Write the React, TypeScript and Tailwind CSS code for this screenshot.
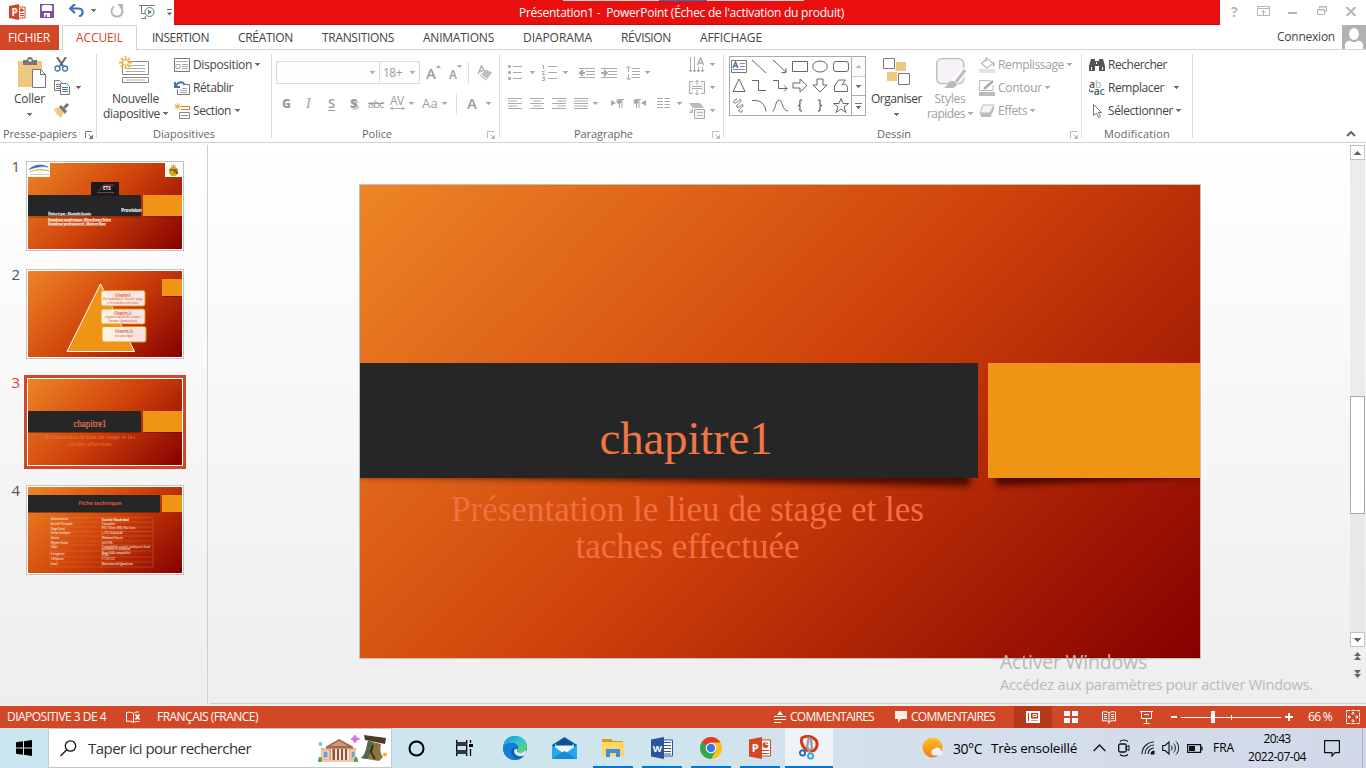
import { useLayoutEffect, useRef } from "react";
import type { ReactNode } from "react";

/* Text whose letter spacing is tuned so that the run is exactly `w` pixels wide. */
function Fit({ w, children, className = "" }: { w: number; children: string; className?: string }) {
  const ref = useRef<HTMLSpanElement>(null);
  useLayoutEffect(() => {
    const el = ref.current;
    if (!el) return;
    el.style.letterSpacing = "0px";
    const natural = el.getBoundingClientRect().width;
    el.style.letterSpacing = `${(w - natural) / children.length}px`;
  }, [w, children]);
  return (
    <span ref={ref} className={`inline-block shrink-0 whitespace-pre ${className}`}>
      {children}
    </span>
  );
}

function Ico({ w, h, className = "", children }: { w: number; h: number; className?: string; children: ReactNode }) {
  return (
    <svg width={w} height={h} viewBox={`0 0 ${w} ${h}`} fill="none" className={`block shrink-0 ${className}`}>
      {children}
    </svg>
  );
}

function Caret({ className = "text-[#6a6a6a]" }: { className?: string }) {
  return (
    <Ico w={5} h={3} className={className}>
      <path d="M0 0h5v1H4v1H3v1H2V2H1V1H0z" fill="currentColor" />
    </Ico>
  );
}

function GroupLabel({ w, children, launcher, faded }: { w: number; children: string; launcher?: string; faded?: boolean }) {
  return (
    <div className="relative flex h-5 items-center justify-center pt-1 text-[11px] text-[#666]">
      <Fit w={w}>{children}</Fit>
      {launcher && (
        <Ico w={8} h={8} className={`absolute top-[9px] ${launcher} ${faded ? "text-[#bbb]" : "text-[#777]"}`}>
          <path d="M.5 7V.5H7M3.500 3.500L7 7" stroke="currentColor" />
          <path d="M8 3.500V8H3.500z" fill="currentColor" />
        </Ico>
      )}
    </div>
  );
}

const Sep = () => <div className="mt-1 h-[84px] w-px shrink-0 bg-[#dedede]" />;

function Lines({ rows, className = "" }: { rows: [number, number][]; className?: string }) {
  return (
    <Ico w={14} h={12} className={`text-[#aaa] ${className}`}>
      {rows.map(([x, len], i) => (
        <path key={i} d={`M${x} ${i * 2.5 + 0.5}h${len}`} stroke="currentColor" />
      ))}
    </Ico>
  );
}

function TitleBar() {
  return (
    <div className="relative flex h-[25px] bg-white">
      <div className="flex w-[174px] items-center">
        <Ico w={17} h={16} className="-mt-0.5 ml-[9px]">
          <path d="M9 3h7v11H9z" fill="#fff" stroke="#d24726" />
          <path d="M11 6.500h4M11 9.500h4M11 11.500h4" stroke="#d24726" />
          <circle cx="12.500" cy="6" r="1.800" fill="#d24726" />
          <path d="M0 2l10-2v16L0 14z" fill="#d24726" />
          <text x="2.400" y="11.600" fontSize="10" fontWeight="700" fill="#fff">P</text>
        </Ico>
        <Ico w={14} h={14} className="-mt-[3px] ml-[14px]">
          <path d="M.9.9h12.200v12.200H.9z" stroke="#8250a0" strokeWidth="1.800" />
          <path d="M3 1h8v6H3z" fill="#fff" />
          <path d="M1 7h12v6H1z" fill="#8250a0" />
          <path d="M4 9h6v4H7v-2.500H5.500V13H4z" fill="#fff" />
        </Ico>
        <Ico w={15} h={13} className="-mt-1 ml-[15px]">
          <path d="M6 0L1 4.500l5 4.500M1.500 4.500H9c6 0 6 6.500 1 8" stroke="#3e74b5" strokeWidth="2.200" />
        </Ico>
        <div className="-mt-1 ml-[7px]"><Caret /></div>
        <Ico w={14} h={14} className="-mt-1 ml-[14px]">
          <path d="M4 2.500A5.500 5.500 0 1 0 10 2.500" stroke="#b5b5b5" strokeWidth="2" />
          <path d="M7 0h6v6z" fill="#b5b5b5" />
        </Ico>
        <Ico w={16} h={16} className="-mt-0.5 ml-[15px]">
          <path d="M0 1.500h16M2.500 2v7.500H7M5 15l2-3M2 14.500h5" stroke="#777" />
          <circle cx="10.500" cy="8" r="4.500" fill="#fff" stroke="#777" />
          <path d="M9 5.500v5l4-2.500z" fill="#3d9b6b" />
        </Ico>
        <Ico w={5} h={7} className="ml-[12px]">
          <path d="M0 .5h5" stroke="#666" />
          <path d="M0 3.500h5L2.500 6.500z" fill="#666" />
        </Ico>
      </div>
      <div className="flex w-[1046px] items-center justify-center border-b border-[#c40d0d] bg-[#ea0f0f] pt-px text-[12px] text-white">
        <Fit w={325} className="-ml-[31px]">Présentation1 -  PowerPoint (Échec de l'activation du produit)</Fit>
      </div>
      <div className="flex w-[146px] items-center text-[#b5b5b5]">
        <span className="-mt-0.5 ml-[11px] w-[7px] text-[14px] leading-none font-bold">?</span>
        <Ico w={13} h={10} className="-mt-1 ml-[19px]">
          <path d="M.5.5h12v9H.5zM1 2.500h11M6.500 9V4.500M4.500 6.500l2-2 2 2" stroke="currentColor" />
        </Ico>
        <Ico w={9} h={2} className="ml-[18px]">
          <path d="M0 0h9v2H0z" fill="currentColor" />
        </Ico>
        <Ico w={10} h={9} className="-mt-1 ml-[20px]">
          <path d="M2.500 2.500V.5h7v5H8M.5 3.500h7v5h-7zM0 4h8M2.500 1h7" stroke="currentColor" />
        </Ico>
        <Ico w={10} h={9} className="-mt-[3px] ml-[19px]">
          <path d="M.5 0l9 9M9.500 0l-9 9" stroke="currentColor" strokeWidth="2" />
        </Ico>
      </div>
      <div className="absolute top-0 left-[563px] flex h-px w-[241px] bg-[#d9d3d2]">
        <div className="ml-24 h-px w-12 bg-[#1976d2]" />
      </div>
    </div>
  );
}

function TabBar() {
  return (
    <div className="flex h-[25px] border-b border-[#d5d5d5] bg-white text-[12px] text-[#444]">
      <div className="flex h-[25px] w-[59px] items-center bg-[#d24726] pl-2 text-white">
        <Fit w={42}>FICHIER</Fit>
      </div>
      <div className="ml-[3px] flex h-[25px] w-[75px] items-center border-x border-t border-[#d5d5d5] bg-white pl-[13px] text-[#d24726]">
        <Fit w={47}>ACCUEIL</Fit>
      </div>
      <div className="flex h-[25px] items-center pl-[15px]">
        <Fit w={57}>INSERTION</Fit>
        <Fit w={55} className="ml-[29px]">CRÉATION</Fit>
        <Fit w={72} className="ml-[29px]">TRANSITIONS</Fit>
        <Fit w={71} className="ml-[29px]">ANIMATIONS</Fit>
        <Fit w={69} className="ml-[29px]">DIAPORAMA</Fit>
        <Fit w={50} className="ml-[29px]">RÉVISION</Fit>
        <Fit w={62} className="ml-[29px]">AFFICHAGE</Fit>
      </div>
      <div className="ml-auto flex h-[24px] items-center">
        <Fit w={58} className="mr-[7px]">Connexion</Fit>
        <Ico w={24} h={24}>
          <path d="M0 0h24v24H0z" fill="#b1b1b1" />
          <ellipse cx="12" cy="9" rx="5" ry="6" fill="#fff" />
          <path d="M3 24v-4c0-3 3-4 5-4.500 2 2 6 2 8 0 2 .5 5 1.500 5 4.500v4z" fill="#fff" />
        </Ico>
      </div>
    </div>
  );
}

function ClipboardGroup() {
  return (
    <div className="w-24">
      <div className="flex h-[72px]">
        <div className="flex w-[54px] flex-col items-center pt-[7px] pl-[5px]">
          <Ico w={28} h={31} className="ml-1">
            <path d="M0 4h24v26H0z" fill="#edc87e" />
            <path d="M5 3h4c0-4 6-4 6 0h4v5H5z" fill="#777" />
            <path d="M10.500 2.500h3v2h-3z" fill="#fff" />
            <path d="M14.500 12.500h8l5 5v13h-13z" fill="#fff" stroke="#777" />
            <path d="M22.500 12.500v5h5" stroke="#777" />
          </Ico>
          <div className="mt-px flex h-5 items-center"><Fit w={31}>Coller</Fit></div>
          <div className="mt-1"><Caret /></div>
        </div>
        <div className="pt-[3px]">
          <div className="flex h-[23px] items-center">
            <Ico w={15} h={15}>
              <path d="M3 0l6 9M12 0L6 9" stroke="#666" strokeWidth="2" />
              <circle cx="3.500" cy="11.500" r="2.500" stroke="#3e74b5" strokeWidth="1.300" />
              <circle cx="11" cy="11.500" r="2.500" stroke="#3e74b5" strokeWidth="1.300" />
            </Ico>
          </div>
          <div className="flex h-[23px] items-center">
            <Ico w={16} h={15}>
              <path d="M.5.5h5l2 2v8h-7zM2 4.500h4M2 6.500h4M2 8.500h4" stroke="#777" />
              <path d="M6.500 3.500h6l3 3v8h-9z" fill="#fff" stroke="#777" />
              <path d="M8 7.500h6M8 9.500h6M8 11.500h6" stroke="#3e74b5" />
            </Ico>
            <div className="ml-1.5"><Caret /></div>
          </div>
          <div className="flex h-[23px] items-center">
            <Ico w={16} h={15}>
              <path d="M0 6l5-2 5 5-3 6C4 13 1 10 0 6z" fill="#edc87e" />
              <path d="M5 4l2-2 6 6-2 3z" fill="#777" />
              <path d="M10 5l4-4" stroke="#777" strokeWidth="3" />
            </Ico>
          </div>
        </div>
      </div>
      <div className="-ml-4"><GroupLabel w={74} launcher="left-[101px]">Presse-papiers</GroupLabel></div>
    </div>
  );
}

function SlidesGroup() {
  return (
    <div className="w-[174px]">
      <div className="flex h-[72px]">
        <div className="flex w-[77px] flex-col items-center pt-[6px]">
          <Ico w={31} h={29} className="-ml-[3px]">
            <path d="M3.500 5.500h26v13h-26zM3.500 21.500h26v5h-26z" fill="#fff" stroke="#888" />
            <path d="M10 9.500h16M7 12.500h19M7 15.500h19M7 24h19" stroke="#aaa" />
            <path d="M6.500 0v13M0 6.500h13M2 2l9 9M11 2l-9 9" stroke="#edb849" strokeWidth="1.800" />
            <circle cx="6.500" cy="6.500" r="2.300" fill="#fff" />
          </Ico>
          <div className="mt-[6px] flex h-[15px] items-center leading-[15px]"><Fit w={47}>Nouvelle</Fit></div>
          <div className="flex h-[15px] items-center leading-[15px]">
            <Fit w={57}>diapositive</Fit>
            <div className="ml-[3px]"><Caret /></div>
          </div>
        </div>
        <div className="pt-[3px]">
          <div className="flex h-[23px] items-center">
            <Ico w={16} h={14}>
              <path d="M.5.5h15v13H.5z" stroke="#777" />
              <path d="M2 3.500h12M2 6.500h4v4H2z" stroke="#aaa" />
              <path d="M8 6.500h6M8 8.500h6M8 10.500h6" stroke="#aaa" />
            </Ico>
            <Fit w={59} className="ml-[3px]">Disposition</Fit>
            <div className="ml-[3px]"><Caret /></div>
          </div>
          <div className="flex h-[23px] items-center">
            <Ico w={16} h={14}>
              <path d="M3.500 8v5.500h12V3.500H10" stroke="#777" />
              <path d="M8 7.500h5M6 9.500h7M6 11.500h7" stroke="#aaa" />
              <path d="M1 1v5h5M1.500 5.500C4 0 9 0 10.500 4" stroke="#3e74b5" strokeWidth="2" />
            </Ico>
            <Fit w={40} className="ml-[3px]">Rétablir</Fit>
          </div>
          <div className="flex h-[23px] items-center">
            <Ico w={16} h={16}>
              <path d="M7 3.500h8.500v3H7" stroke="#e07a2e" />
              <path d="M5.500 9.500h10v6h-10zM7 12.500h7" stroke="#888" />
              <path d="M3.500 0v7M0 3.500h7M1 1l5 5M6 1L1 6" stroke="#edb849" />
            </Ico>
            <Fit w={38} className="ml-[3px]">Section</Fit>
            <div className="ml-1"><Caret /></div>
          </div>
        </div>
      </div>
      <GroupLabel w={62}>Diapositives</GroupLabel>
    </div>
  );
}

const faded = "text-[#aaa]";

function FontGroup() {
  return (
    <div className="w-[227px]">
      <div className="h-[72px] pt-[11px] text-[#9d9d9d]">
        <div className="flex h-[23px] items-center pl-1">
          <div className="flex h-[23px] w-[104px] items-center justify-end border border-[#dcdcdc] bg-[#fdfdfd] pr-[4px]">
            <Caret className={faded} />
          </div>
          <div className="flex h-[23px] w-[40px] items-center justify-between border-y border-r border-[#dcdcdc] bg-[#fdfdfd] pr-[4px] pl-[3px]">
            <Fit w={19}>18+</Fit>
            <Caret className={faded} />
          </div>
          <span className="ml-[6px] w-[10px] pt-px text-[15px] leading-none font-semibold">A</span>
          <Ico w={5} h={3} className="mb-3"><path d="M0 3h5L2.500 0z" fill="#aaa" /></Ico>
          <span className="ml-[8px] w-[8px] pt-1 text-[12px] leading-none font-semibold">A</span>
          <Ico w={5} h={3} className="mb-3"><path d="M0 0h5L2.500 3z" fill="#aaa" /></Ico>
          <div className="ml-[6px] h-[22px] w-px bg-[#dedede]" />
          <Ico w={16} h={16} className="ml-[8px]">
            <path d="M1 9l3.500-8L8 7M2 6h4" stroke="#aaa" strokeWidth="1.400" />
            <path d="M9 4.500l6 3-6 8-6-5z" fill="#bdbdbd" />
            <path d="M4 9.500l6 4.500" stroke="#fff" />
          </Ico>
        </div>
        <div className="mt-2 flex h-[23px] items-center pl-[10px] leading-none">
          <span className="w-[24px] text-[12px] font-extrabold">G</span>
          <span className="w-[22px] font-['Liberation_Serif',serif] text-[14px] italic">I</span>
          <span className="w-[22px] text-[13px] font-semibold underline underline-offset-2">S</span>
          <span className="w-[18px] text-[13px] font-extrabold [text-shadow:2px_2px_1px_#ccc]">S</span>
          <span className="w-[22px] text-[11px] tracking-[-0.8px] line-through">abc</span>
          <div className="w-[16px]">
            <div className="text-[12px] leading-[10px] tracking-[-0.5px]">AV</div>
            <Ico w={15} h={5}><path d="M0 2.500h15M3 .5l-2 2 2 2M12 .5l2 2-2 2" stroke="#aaa" /></Ico>
          </div>
          <div className="ml-[3px] w-[5px]"><Caret className={faded} /></div>
          <Fit w={16} className="ml-[8px] text-[13px]">Aa</Fit>
          <div className="ml-[4px] w-[5px]"><Caret className={faded} /></div>
          <div className="ml-[9px] h-[22px] w-px bg-[#dedede]" />
          <span className="ml-[10px] w-[10px] text-[15px] font-semibold">A</span>
          <div className="ml-[9px] w-[5px]"><Caret className={faded} /></div>
        </div>
      </div>
      <div className="-ml-[17px]"><GroupLabel w={30} launcher="left-[232px]" faded>Police</GroupLabel></div>
    </div>
  );
}

function ParagraphGroup() {
  const indentLines = "M0 .5h16M7 3.500h9M7 6.500h9M0 9.500h16";
  return (
    <div className="w-[223px]">
      <div className="flex h-[72px]">
        <div className="w-[189px] pt-[11px] text-[#aaa]">
          <div className="flex h-[23px] items-center pl-2">
            <Ico w={14} h={15}>
              <path d="M0 1.500h3M0 7.500h3M0 13.500h3" stroke="#aaa" strokeWidth="2.600" />
              <path d="M5 1.500h9M5 7.500h9M5 13.500h9" stroke="#aaa" />
            </Ico>
            <div className="ml-[8px]"><Caret className={faded} /></div>
            <Ico w={15} h={16} className="ml-[7px]">
              <path d="M0 .5h1.500V4M0 6.500h2.500L.5 9.500H3M0 12h2.500v3.500H0M1 13.500h2M6 1.500h9M6 7.500h9M6 13.500h9" stroke="#aaa" />
            </Ico>
            <div className="ml-[6px]"><Caret className={faded} /></div>
            <Ico w={16} h={10} className="ml-[11px]">
              <path d={indentLines} stroke="#aaa" />
              <path d="M6 5H1M4 2L1 5l3 3" stroke="#aaa" strokeWidth="2" />
            </Ico>
            <Ico w={16} h={10} className="ml-[6px]">
              <path d={indentLines} stroke="#aaa" />
              <path d="M0 5h5M3 2l3 3-3 3" stroke="#aaa" strokeWidth="2" />
            </Ico>
            <Ico w={14} h={16} className="ml-[9px]">
              <path d="M2.500 1v6M2.500 9v6M0 3.500L2.500 1 5 3.500M0 12.500L2.500 15 5 12.500M6 3.500h8M6 6.500h8M6 9.500h8M6 12.500h8" stroke="#aaa" />
            </Ico>
            <div className="ml-[5px]"><Caret className={faded} /></div>
          </div>
          <div className="mt-2 flex h-[23px] items-center pl-2">
            <Lines rows={[[0, 14], [0, 9], [0, 14], [0, 9], [0, 14]]} />
            <Lines className="ml-2" rows={[[0, 14], [3, 8], [0, 14], [3, 8], [0, 14]]} />
            <Lines className="ml-2" rows={[[0, 14], [5, 9], [0, 14], [5, 9], [0, 14]]} />
            <Lines className="ml-2" rows={[[0, 14], [0, 14], [0, 14], [0, 14], [0, 14]]} />
            <div className="ml-[5px]"><Caret className={faded} /></div>
            <Ico w={13} h={9} className="ml-[13px]">
              <path d="M0 1l5 3-5 3z" fill="#aaa" />
              <path d="M8.500 0v9M11 0v9M7 .5h6" stroke="#aaa" /><circle cx="8" cy="2.500" r="2.500" fill="#aaa" />
            </Ico>
            <Ico w={13} h={9} className="ml-[9px]">
              <path d="M13 1L8 4l5 3z" fill="#aaa" />
              <path d="M3.500 0v9M6 0v9M2 .5h6" stroke="#aaa" /><circle cx="3" cy="2.500" r="2.500" fill="#aaa" />
            </Ico>
            <Ico w={13} h={12} className="ml-[11px]">
              <path d="M0 .5h6M7.500.5h6M0 3.500h6M7.500 3.500h6M0 6.500h6M7.500 6.500h6M0 9.500h6M7.500 9.500h6" stroke="#aaa" />
            </Ico>
            <div className="ml-[7px]"><Caret className={faded} /></div>
          </div>
        </div>
        <div className="pt-[3px]">
          <div className="flex h-[23px] items-center">
            <Ico w={16} h={16}>
              <path d="M1.500 0v15M5.500 0v15M9.500 10v5M13.500 10v5M0 13l1.500 2L3 13M4 13l1.500 2L7 13M8 13l1.500 2 1.500-2M12 13l1.500 2 1.500-2" stroke="#aaa" />
              <path d="M8.500 8l3-7 3 7M9.500 6h4" stroke="#aaa" strokeWidth="1.500" />
            </Ico>
            <div className="ml-[5px]"><Caret className={faded} /></div>
          </div>
          <div className="flex h-[23px] items-center">
            <Ico w={16} h={16}>
              <path d="M4 1.500H.5v12H4M12 1.500h3.500v12H12" fill="#f6f2f6" stroke="#aaa" />
              <path d="M3 6.500h10M3 8.500h10M8 0v5M8 10v5M6 2.500L8 .5l2 2M6 13l2 2 2-2" stroke="#aaa" />
            </Ico>
            <div className="ml-[5px]"><Caret className={faded} /></div>
          </div>
          <div className="flex h-[23px] items-center">
            <Ico w={16} h={16}>
              <path d="M0 0h11l4 5H4z M0 10l4-5v5z" fill="#bbb" />
              <path d="M5.500 6.500h10v9h-10z" fill="#f6f2f6" stroke="#aaa" />
              <path d="M8 9.500h6M8 12.500h6" stroke="#bbb" />
            </Ico>
            <div className="ml-[5px]"><Caret className={faded} /></div>
          </div>
        </div>
      </div>
      <div className="-ml-4"><GroupLabel w={59} launcher="left-[228px]" faded>Paragraphe</GroupLabel></div>
    </div>
  );
}

const shapes: ReactNode[] = [
  <><path d="M.5 1.500h15v12H.5z" stroke="#777" /><path d="M2 9l2.500-6L7 9M3 7h3" stroke="#3e74b5" strokeWidth="1.400" /><path d="M9 4.500h5M9 7.500h5M2 10.500h12" stroke="#888" /></>,
  <path d="M1 1l14 13" stroke="#666" />,
  <path d="M1 1l13 12M14 9v4.500H9.500" stroke="#666" />,
  <path d="M.5 2.500h15v10H.5z" stroke="#666" />,
  <ellipse cx="8" cy="7.500" rx="7.300" ry="5.500" stroke="#666" />,
  <rect x=".5" y="2.500" width="15" height="10" rx="2.500" stroke="#666" />,
  <path d="M8 1l6 12.500H2z" stroke="#666" />,
  <path d="M1 2.500h6.500v10H15" stroke="#666" />,
  <path d="M1 2.500h5.500v8H15M12 7.500l3 3-3 3" stroke="#666" />,
  <path d="M1 5h7V1l7 6.500L8 14v-4H1z" stroke="#666" />,
  <path d="M5 1v6H1l7 7 7-7h-4V1z" stroke="#666" />,
  <path d="M1.500 13.500V8l4-6h7L9 7c4-2 6 0 5.500 6.500z" stroke="#666" />,
  <path d="M6 1C2 2 2 5 4 5s5-5 6-3-6 5-4 7 5-4 6-2-5 4-4 6 4 1 3-1" stroke="#666" />,
  <path d="M1 2.500c8-1 13 3 14 11" stroke="#666" />,
  <path d="M0 13c4 0 3-11 7-11s3 11 9 11" stroke="#666" />,
  <path d="M10 2c-3 0-2 1-2 3s0 2.500-2 2.500c2 0 2 .5 2 2.500s-1 3 2 3" stroke="#666" strokeWidth="1.300" />,
  <path d="M6 2c3 0 2 1 2 3s0 2.500 2 2.500c-2 0-2 .5-2 2.500s1 3-2 3" stroke="#666" strokeWidth="1.300" />,
  <path d="M8 .5l2 5h5.500l-4.500 3.500 2 5.500L8 11l-5 3.500L5 9 .5 5.500H6z" stroke="#666" />,
];

function DrawingGroup() {
  return (
    <div className="w-[357px]">
      <div className="flex h-[72px]">
        <div className="mt-[6px] ml-[5px] flex h-[60px] w-[137px] border border-[#ababab]">
          <div className="-ml-px grid w-[122px] grid-cols-6 grid-rows-3 items-center justify-items-center">
            {shapes.map((s, i) => (
              <Ico key={i} w={16} h={15}>{s}</Ico>
            ))}
          </div>
          <div className="flex w-[14px] flex-col border-l border-[#ababab]">
            <div className="flex flex-1 items-center justify-center border-b border-[#ccc] bg-[#fafafa]">
              <Caret className="rotate-180 text-[#bbb]" />
            </div>
            <div className="flex flex-1 items-center justify-center border-b border-[#ababab]"><Caret /></div>
            <div className="flex flex-1 flex-col items-center justify-center gap-0.5">
              <div className="h-px w-[7px] bg-[#777]" />
              <Caret />
            </div>
          </div>
        </div>
        <div className="flex w-[61px] flex-col items-center pt-2">
          <Ico w={28} h={28}>
            <path d="M13 4h10v9H13zM4 14h10v9H4z" fill="#edc87e" />
            <path d="M.5.5h11v10H.5zM15.500 15.500h11v11h-11z" fill="#fff" stroke="#777" />
          </Ico>
          <div className="mt-[3px] flex h-5 items-center"><Fit w={51}>Organiser</Fit></div>
          <div className="mt-1"><Caret /></div>
        </div>
        <div className="flex w-[48px] flex-col items-center pt-2 text-[#a0a0a0]">
          <Ico w={30} h={31}>
            <rect x=".7" y=".7" width="27" height="25" rx="5" fill="#f6f2f7" stroke="#bbb" strokeWidth="1.300" />
            <path d="M30 12L18 24" stroke="#fff" strokeWidth="7" />
            <path d="M29 12l-9 12" stroke="#bbb" strokeWidth="3" />
            <path d="M7 30c5-1 4-8 10-7s4 7-1 7z" fill="#bbb" />
          </Ico>
          <div className="mt-[2px] -ml-[2px] flex h-[15px] items-center leading-[15px]"><Fit w={31}>Styles</Fit></div>
          <div className="-ml-[2px] flex h-[15px] items-center leading-[15px]">
            <Fit w={38}>rapides</Fit>
            <div className="ml-[3px]"><Caret className={faded} /></div>
          </div>
        </div>
        <div className="ml-[4px] pt-[3px] text-[#a0a0a0]">
          <div className="flex h-[23px] items-center">
            <Ico w={17} h={16}>
              <path d="M2.500 6.500L8 1.500l6 5-6 4.500zM7 0v5" stroke="#bbb" strokeWidth="1.200" />
              <path d="M14 4c2 2 2 5 0 6z" fill="#aaa" />
              <path d="M0 12h16v4H0z" fill="#e6e0e4" />
            </Ico>
            <Fit w={66} className="ml-[2px]">Remplissage</Fit>
            <div className="ml-[3px]"><Caret className={faded} /></div>
          </div>
          <div className="flex h-[23px] items-center">
            <Ico w={17} h={16}>
              <path d="M14 5v5.500H.5V.5H11" stroke="#bbb" />
              <path d="M5 9l9-8" stroke="#aaa" strokeWidth="2.500" />
              <path d="M0 12h16v4H0z" fill="#bbb" />
            </Ico>
            <Fit w={44} className="ml-[2px]">Contour</Fit>
            <div className="ml-[3px]"><Caret className={faded} /></div>
          </div>
          <div className="flex h-[23px] items-center">
            <Ico w={17} h={14}>
              <path d="M4 1h11L11 9H1z" fill="#f6f2f7" stroke="#bbb" />
              <path d="M1 9h10l4-8v4l-3.500 8H2z" fill="#bbb" />
            </Ico>
            <Fit w={29} className="ml-[2px]">Effets</Fit>
            <div className="ml-[3px]"><Caret className={faded} /></div>
          </div>
        </div>
      </div>
      <div className="-ml-[17px]"><GroupLabel w={34} launcher="left-[363px]" faded>Dessin</GroupLabel></div>
    </div>
  );
}

function EditGroup() {
  return (
    <div className="w-[110px]">
      <div className="h-[72px] pt-[3px] pl-[7px]">
        <div className="flex h-[23px] items-center">
          <Ico w={16} h={13}>
            <path d="M2 1h4v2h4V1h4l2 7v5h-6V8H6v5H0V8z" fill="#555" />
            <path d="M2.500 9v3M13.500 9v3M7.500 4v2" stroke="#fff" />
          </Ico>
          <Fit w={59} className="ml-[3px]">Rechercher</Fit>
        </div>
        <div className="flex h-[23px] items-center">
          <Ico w={16} h={16}>
            <g fontSize="10.500" fontWeight="600">
              <text x="0" y="7.500" fill="#555">a</text>
              <text x="6" y="7.500" fill="#aaa" fontWeight="400">b</text>
              <text x="4.800" y="14.500" fill="#555">a</text>
              <text x="10.600" y="14.500" fill="#3e74b5">c</text>
            </g>
            <path d="M.5 9v2.500H4M2.500 10L4 11.500 2.500 13" stroke="#3e74b5" />
          </Ico>
          <Fit w={56} className="ml-[3px]">Remplacer</Fit>
          <div className="ml-[10px]"><Caret /></div>
        </div>
        <div className="flex h-[23px] items-center">
          <Ico w={16} h={14}>
            <path d="M4.500.5v11l3-2.500 2 4.500 2-1-2-4h3z" stroke="#777" />
          </Ico>
          <Fit w={65} className="ml-[3px]">Sélectionner</Fit>
          <div className="ml-[3px]"><Caret /></div>
        </div>
      </div>
      <GroupLabel w={66}>Modification</GroupLabel>
    </div>
  );
}

function Ribbon() {
  return (
    <div className="flex h-[93px] border-b border-[#d2d2d2] bg-white text-[12px] text-[#444]">
      <ClipboardGroup /><Sep />
      <SlidesGroup /><Sep />
      <FontGroup /><Sep />
      <ParagraphGroup /><Sep />
      <DrawingGroup /><Sep />
      <EditGroup /><Sep />
      <div className="flex flex-1 items-end justify-end pr-[10px] pb-[5px]">
        <Ico w={10} h={6}><path d="M1 5l4-4 4 4" stroke="#666" strokeWidth="2" /></Ico>
      </div>
    </div>
  );
}

const slideBg = "bg-[linear-gradient(135deg,#ee8526_0%,#cf420a_50%,#850000_100%)]";

const thumbArt: ReactNode[] = [
  <>
    <path d="M0 0h22v14H0zM137 0h17v14h-17z" fill="#fff" />
    <path d="M1 6.500c5-5 13-6 19-2.500C14 3 8 4 1 6.500z" fill="#2c6fb7" stroke="#2c6fb7" strokeWidth=".6" />
    <path d="M2 9c6-3 13-3 19-1" stroke="#ef9414" />
    <path d="M2 11.500h19" stroke="#aaa" strokeWidth=".6" />
    <ellipse cx="145.500" cy="8.500" rx="4.800" ry="4.800" fill="#d8aa16" />
    <path d="M145.500 1v4M143 3h5" stroke="#e08080" />
    <path d="M142 7h7M146 9h3v2" stroke="#443300" strokeWidth="1.200" />
    <path d="M0 53.500h112v1H0zM117 53.500h37v1h-37z" fill="#4a0b00" opacity=".5" />
    <path d="M0 32h113v21H0z" fill="#262626" />
    <path d="M115 32h39v21h-39z" fill="#ef9414" />
    <path d="M63 19h28v14H63z" fill="#1c1a1c" />
    <path d="M71 28l5-6h10" stroke="#b33" />
    <text x="75" y="27" fontSize="4.500" fontWeight="700" fill="#fff">ETS</text>
    <path d="M69 29.500h17" stroke="#946" strokeWidth=".8" />
    <text x="93" y="49" fontSize="4.800" fontWeight="700" fill="#fff" textLength="21">Provision</text>
    <g fontSize="3.400" fontWeight="700" fill="#fff" textDecoration="underline">
      <text x="20" y="51.500" textLength="43">Élaboré par : Mostafa Souria</text>
      <text x="20" y="57.500" textLength="63">Encadreur académique : Mme Amani Selmi</text>
      <text x="20" y="61.500" textLength="58">Encadreur professionnel : Mariem Nasr</text>
    </g>
  </>,
  <>
    <path d="M134 8h20v17h-20z" fill="#ef9414" />
    <path d="M135 25.500h19" stroke="#4a0b00" opacity=".5" />
    <path d="M72.500 13l34 67.500H39z" fill="#ef9414" stroke="#fff" />
    <g fill="#fff" fillOpacity=".88" stroke="#ef9414">
      <rect x="73" y="19.500" width="44" height="15.500" rx="2" />
      <rect x="73" y="38" width="44" height="15" rx="2" />
      <rect x="74" y="55.500" width="44" height="15.500" rx="2" />
    </g>
    <g fontSize="3.800" textAnchor="middle" fill="#e0503a" className="font-['Liberation_Serif',serif]">
      <text x="95" y="24.500" fontWeight="700" fontStyle="italic" textDecoration="underline">Chapitre1</text>
      <text x="95" y="29" textLength="40">Présentation le lieu de stage</text>
      <text x="95" y="32.500" textLength="32">et les taches effectuée</text>
      <text x="95" y="42.500" fontWeight="700" fontStyle="italic" textDecoration="underline">Chapitre 2:</text>
      <text x="95" y="47" textLength="36">régularisation des autres</text>
      <text x="95" y="50.500" textLength="28">banque (provision)</text>
      <text x="96" y="60.500" fontWeight="700" fontStyle="italic" textDecoration="underline">Chapitre 3:</text>
      <text x="96" y="65.500">cas pratique</text>
    </g>
  </>,
  <>
    <path d="M0 53h112v1H0zM117 53h37v1h-37z" fill="#4a0b00" opacity=".5" />
    <path d="M0 32h113v21H0z" fill="#262626" />
    <path d="M115 32h39v21h-39z" fill="#ef9414" />
    <g fill="#f07646" textAnchor="middle" className="font-['Liberation_Serif',serif]">
      <text x="62" y="48" fontSize="10" stroke="#f07646" strokeWidth=".2" textLength="33" lengthAdjust="spacingAndGlyphs">chapitre1</text>
      <text x="62" y="60" fontSize="6" textLength="90" fontWeight="700" opacity=".7">Présentation le lieu de stage et les</text>
      <text x="62" y="67" fontSize="6" textLength="43" fontWeight="700" opacity=".7">taches effectuée</text>
    </g>
  </>,
  <>
    <path d="M0 25h131v1H0z" fill="#4a0b00" opacity=".5" />
    <path d="M0 8h132v17H0z" fill="#262626" />
    <path d="M134 8h20v17h-20z" fill="#ef9414" />
    <text x="72" y="18" fontSize="5.600" fontWeight="700" fill="#e0553a" textAnchor="middle" textLength="43">Fiche technique</text>
    <g stroke="#ef8a3a" strokeWidth=".5" opacity=".6">
      <path d="M22 30.500h103M22 35h103M22 40h103M22 44.500h103M22 49h103M22 54h103M22 58h103M22 64h103M22 70h103M22 75h103M22 80h103M22 30.500V80M73.500 30.500V80M125 30.500V80" />
    </g>
    <g fontSize="2.500" fontWeight="600" fill="#fff" fillOpacity=".85">
      <text x="23" y="32.500">Dénomination</text><text x="74" y="33.500" fontSize="2.900" fontWeight="800">Société Hasdrubal</text>
      <text x="23" y="37.500">Activité Principale</text><text x="74" y="37.500">Comptable</text>
      <text x="23" y="42.500">Siège Social</text><text x="74" y="41.600">RTE, 10 km, 3000, Sfax Tunis</text>
      <text x="23" y="46.500">Forme Juridique</text><text x="74" y="46.500">+ 216 74 44 44 44</text>
      <text x="23" y="51.500">Gérant</text><text x="74" y="51.500">Mohamed Souria</text>
      <text x="23" y="56.500">Régime fiscale</text><text x="74" y="57">réel 25%</text>
      <text x="23" y="60.500">Objet</text><text x="74" y="60.500" textLength="48">Comptabilité, conseil, juridique et fiscal</text>
      <text x="74" y="63.300">assistance et formation</text>
      <text x="23" y="67.500">Enregistrée</text><text x="74" y="66.500">Rapp 5404 comptabilité</text>
      <text x="74" y="69.400">Et juri</text>
      <text x="23" y="72.500">Téléphone</text><text x="74" y="72.500">71 222 222</text>
      <text x="23" y="77.500">Email</text><text x="74" y="77.500" textLength="31">Mail.contact.fa.f@gmail.com</text>
    </g>
  </>,
];

function Thumbnails() {
  return (
    <div className="w-[207px] shrink-0 pt-[18px]">
      {thumbArt.map((art, i) => {
        const active = i === 2;
        return (
          <div key={i} className="flex h-[108px]">
            <div className={`w-[26px] shrink-0 pl-[11.500px] text-[15px] leading-[10px] ${active ? "text-[#d24726]" : "text-[#555]"}`}>{i + 1}</div>
            <div className={`h-[90px] w-[158px] border bg-white p-px ${active ? "border-[#d24726] outline-2 outline-[#d24726]" : "border-[#c3c3c3]"}`}>
              <div className={`h-[86px] w-[154px] overflow-hidden ${slideBg}`}>
                <Ico w={154} h={86}>{art}</Ico>
              </div>
            </div>
          </div>
        );
      })}
    </div>
  );
}

function Slide() {
  return (
    <div className="mt-[41px] ml-[151px] h-[475px] w-[842px] shrink-0 border border-[#c0c0c0]">
      <div className={`relative h-[473px] w-[840px] overflow-hidden ${slideBg}`}>
        <Ico w={840} h={473} className="absolute top-0 left-0">
          <defs>
            <filter id="soft" x="-5%" y="-200%" width="110%" height="500%"><feGaussianBlur stdDeviation="3" /></filter>
          </defs>
          <g fill="#2a0500" opacity=".75" filter="url(#soft)">
            <path d="M-20 280h630v21L-20 291z" />
            <path d="M636 280h230v11l-230 10z" />
          </g>
        </Ico>
        <div className="absolute top-[178px] left-0 h-[115px] w-[618px] bg-[#262626]" />
        <div className="absolute top-[178px] left-[628px] h-[115px] w-[212px] bg-[#ef9414]" />
        <div className="absolute top-[226px] left-0 w-[652px] text-center font-['Liberation_Serif',serif] text-[47px] leading-[54px] text-[#f07646]">
          <Fit w={173}>chapitre1</Fit>
        </div>
        <div className="absolute top-[306px] left-0 flex w-[655px] flex-col items-center font-['Liberation_Serif',serif] text-[35px] leading-[37px] text-[#f07040]">
          <Fit w={473}>Présentation le lieu de stage et les</Fit>
          <Fit w={224}>taches effectuée</Fit>
        </div>
      </div>
    </div>
  );
}

function ScrollArrow({ up = false }: { up?: boolean }) {
  return (
    <div className="flex h-[15px] w-[15px] items-center justify-center border border-[#c3c3c3] bg-white">
      <Ico w={7} h={4} className={up ? "rotate-180" : ""}><path d="M0 0h7v1H6v1H5v1H4v1H3V3H2V2H1V1H0z" fill="#666" /></Ico>
    </div>
  );
}

function Scrollbar() {
  return (
    <div className="mt-[2px] mr-px ml-auto flex w-[15px] flex-col items-center">
      <ScrollArrow up />
      <div className="h-[236px] w-[15px] bg-[#ececec]" />
      <div className="h-[118px] w-[15px] border border-[#ababab] bg-white" />
      <div className="h-[118px] w-[15px] bg-[#e8e8e8]" />
      <ScrollArrow />
      <Ico w={7} h={9} className="mt-[5px]"><path d="M0 4h7L3.500 0zM0 8h7L3.500 4z" fill="#666" /></Ico>
      <Ico w={7} h={9} className="mt-[9px]"><path d="M0 0h7L3.500 4zM0 4h7L3.500 8z" fill="#666" /></Ico>
    </div>
  );
}

function Workspace() {
  return (
    <div className="relative flex h-[563px] bg-linear-to-b from-white to-[#eeeeee]">
      <Thumbnails />
      <div className="mt-[2px] mb-[2px] w-px bg-[#cfcfcf]" />
      <div className="mb-[2px] ml-[2px] flex flex-1 border-b border-[#cfcfcf]">
        <div className="-ml-[2px]"><Slide /></div>
        <Scrollbar />
      </div>
      <div className="absolute top-[507px] left-[1000px] flex flex-col items-start text-[#b9b9b9]">
        <Fit w={147} className="text-[19.500px] leading-[24px]">Activer Windows</Fit>
        <Fit w={313} className="text-[14.500px] leading-[22px]">Accédez aux paramètres pour activer Windows.</Fit>
      </div>
    </div>
  );
}

function StatusBar() {
  return (
    <div className="flex h-[22px] items-center bg-[#d24726] text-[12px] text-white">
      <Fit w={99} className="ml-[7px]">DIAPOSITIVE 3 DE 4</Fit>
      <Ico w={15} h={12} className="ml-5">
        <path d="M7.500 2.500C6 1 3 1 .5 1.500v9c2.500-.5 5-.5 7 1V2.500C9 1 10 1 13 1M7.500 11.500c1-1 3-1 6-1" stroke="#fff" />
        <path d="M9.500 3.500l4 5M13.500 3.500l-4 5" stroke="#fff" strokeWidth="1.600" />
      </Ico>
      <Fit w={101} className="ml-4">FRANÇAIS (FRANCE)</Fit>
      <Ico w={12} h={12} className="ml-[516px]">
        <path d="M3 4l3-4 3 4z" fill="#fff" />
        <path d="M0 5.500h12M0 8.500h12M0 11.500h7" stroke="#fff" />
      </Ico>
      <Fit w={84} className="ml-1">COMMENTAIRES</Fit>
      <Ico w={12} h={12} className="ml-[21px]"><path d="M0 0h12v8H6l-3 4V8H0z" fill="#fff" fillOpacity=".9" /></Ico>
      <Fit w={84} className="ml-1">COMMENTAIRES</Fit>
      <div className="ml-[19px] flex h-[22px] w-[38px] items-center justify-center bg-[#b7391c]">
        <Ico w={14} h={12}>
          <path d="M1 1h12v10H1zM4 1v10M4 8.500h9" stroke="#fff" strokeWidth="2" />
          <path d="M7 3.500h3.500v2H7z" stroke="#fff" />
        </Ico>
      </div>
      <Ico w={14} h={12} className="ml-3"><path d="M0 0h6v5H0zM8 0h6v5H8zM0 7h6v5H0zM8 7h6v5H8z" fill="#fff" /></Ico>
      <Ico w={14} h={13} className="ml-6">
        <path d="M7 2C5 .5 3 .5.5 1v9c2.500-.5 4.500-.5 6.500 1 2-1.500 4-1.500 6.500-1V1C11 .5 9 .5 7 2zM7 2v11M2 3.500h3M2 5.500h3M2 7.500h3M9 3.500h3M9 5.500h3M9 7.500h3" stroke="#fff" />
      </Ico>
      <Ico w={13} h={13} className="ml-6"><path d="M0 .5h13M1.500 1v6.500h10V1M4 3.500h5M6.500 8v4M3.500 12.500h6" stroke="#fff" /></Ico>
      <div className="ml-[18px] h-[2px] w-[6px] bg-white" />
      <div className="relative ml-1 h-px w-[100px] bg-white">
        <div className="absolute -top-[6px] left-[30px] h-3 w-1 bg-white" />
        <div className="absolute -top-[2px] left-[50px] h-[5px] w-px bg-white" />
      </div>
      <Ico w={8} h={8} className="ml-1"><path d="M0 4h8M4 0v8" stroke="#fff" strokeWidth="2" /></Ico>
      <Fit w={24} className="ml-[15px]">66 %</Fit>
      <Ico w={14} h={14} className="ml-[14px]">
        <path d="M.5.5h13v13H.5z" stroke="#fff" strokeDasharray="4 1" />
        <path d="M7 2v3M7 9v3M2 7h3M9 7h3M5.500 3.500L7 2l1.500 1.500M5.500 10.500L7 12l1.500-1.500M3.500 5.500L2 7l1.500 1.500M10.500 5.500L12 7l-1.500 1.500" stroke="#fff" />
      </Ico>
    </div>
  );
}

function OfficeIcon({ letter, color }: { letter: string; color: string }) {
  return (
    <Ico w={22} h={22}>
      <path d="M11.500 3h10v16h-10z" fill="#fff" stroke={color} />
      {letter === "W" ? (
        <path d="M13 5.500h7M13 8.500h7M13 11.500h7M13 14.500h7M13 17h7" stroke={color} />
      ) : (
        <>
          <circle cx="16.500" cy="8" r="3" fill={color} />
          <path d="M17 4v3.500h4" stroke="#fff" />
          <path d="M13 13.500h7M13 16.500h7" stroke={color} />
        </>
      )}
      <path d="M0 2.500L13 0v22L0 19.500z" fill={color} />
      <text x="6.300" y="15" textAnchor="middle" fontSize={letter === "W" ? 9.5 : 11} fontWeight="700" fill="#fff">{letter}</text>
    </Ico>
  );
}

function AppSlot({ children }: { children: ReactNode }) {
  return (
    <div className="flex h-10 w-[49px]">
      <div className="flex h-10 w-10 items-center justify-center border-b-2 border-[#0078d7] pt-0.5">{children}</div>
    </div>
  );
}

function Taskbar() {
  return (
    <div className="flex h-10 items-center bg-[linear-gradient(90deg,#cbe6ee_0%,#cfe5ee_45%,#d4dfeb_70%,#d2d8e8_100%)] text-black">
      <Ico w={16} h={16} className="ml-4">
        <path d="M0 2.300l7-1v6.200H0zM8 1.200L16 0v7.500H8zM0 8.500h7v6.200l-7-1zM8 8.500h8V16l-8-1.200z" fill="#000" />
      </Ico>
      <div className="ml-4 flex h-10 w-[344px] items-center border border-[#c2c8cb] bg-white">
        <Ico w={17} h={17} className="ml-[11px]">
          <circle cx="10.500" cy="6" r="5.200" stroke="#111" strokeWidth="1.300" />
          <path d="M6.800 9.800L.5 16" stroke="#111" strokeWidth="1.300" />
        </Ico>
        <Fit w={163} className="ml-[11px] text-[15px] text-[#333]">Taper ici pour rechercher</Fit>
        <Ico w={70} h={30} className="ml-[67px]">
          <circle cx="2.500" cy="11" r="2" fill="#5fd3e0" />
          <path d="M37 2l1.500 2.500L41.500 6 38.500 7.500 37 10l-1.500-2.500L33 6l2.500-1.500z" fill="#e06bf0" stroke="#e06bf0" />
          <path d="M3 15h35v14H3z" fill="#efb592" />
          <path d="M8 13.500L21 6l14 7.500v2H8z" fill="#a46a4e" />
          <path d="M12 13l9-5 9 5z" fill="#d79772" />
          <path d="M12 16h19v12H12z" fill="#7e564c" />
          <path d="M13.500 16v12M18 16v12M22 16v12M26 16v12M30 16v12" stroke="#ffe0c4" strokeWidth="2" />
          <path d="M5 18h5v7H5zM33 18h4v7h-4z" fill="#5aa5d8" stroke="#ffe0c4" />
          <path d="M2 28h37" stroke="#f5c5a8" strokeWidth="2" />
          <path d="M0 29c0-7 4-7 4 0zM36 29c0-7 4-7 4 0z" fill="#52a552" />
          <path d="M46 2l22 3-1 6-20-4z" fill="#4a3b26" />
          <path d="M50 8l13 3c-1 5-1 9 2 13l-4 4-18-3c5-4 5-9 7-17z" fill="#8b743d" />
          <path d="M50 8l5 1c-1 8-3 12-6 17l-6-1c5-4 5-9 7-17z" fill="#52694a" />
          <path d="M55 12l-2 7 4 7" stroke="#2b2013" strokeWidth="1.500" />
          <circle cx="67" cy="21.500" r="2" fill="#f5ae20" />
        </Ico>
      </div>
      <Ico w={17} h={17} className="ml-4"><circle cx="8.500" cy="8.500" r="7" stroke="#000" strokeWidth="2" /></Ico>
      <Ico w={17} h={16} className="ml-[31px]">
        <path d="M.7 0v3h10V0M.7 16v-3h10v3M.7 5h10v6H.7zM14.500 0v3M14.500 9v7" stroke="#000" strokeWidth="1.300" />
        <path d="M13 4h4v3h-4z" fill="#000" />
      </Ico>
      <Ico w={24} h={24} className="ml-[30px]">
        <defs>
          <linearGradient id="edgeTop" x1="0" y1="0" x2="1" y2="1"><stop stopColor="#1695d9" /><stop offset=".5" stopColor="#35c1d6" /><stop offset="1" stopColor="#67dc4b" /></linearGradient>
        </defs>
        <circle cx="12" cy="12" r="12" fill="#0b62b5" />
        <path d="M0 12C0 5 5 0 12 0s12 5 12 10c0 4-3 7-8 6-3-.5-2-2-1-3 1-2-1-6-6-6-5 0-8 3-9 5z" fill="url(#edgeTop)" />
        <path d="M0 12c1-4 4-6 8-5 4 .5 7 3 6.500 6-1-2-5-2-6 1-1.500 4 2 8 7 9C8 26 0 20 0 12z" fill="#1380d8" />
        <path d="M14.500 13c-1 2-1 3 2 3.500 3 0 4-.5 7-3 0 2-.5 4-1.500 6-4 1.500-10 1-11-4 0-2 2-3.500 3.500-2.500z" fill="#d5e9f1" />
      </Ico>
      <Ico w={25} h={24} className="ml-[25px]">
        <path d="M0 9L12.500 1 25 9v14H0z" fill="#0a5cad" />
        <path d="M3 8.500h19v9H3z" fill="#f1f6fa" />
        <path d="M3 9.500L12.500 3 22 9.500z" fill="#0b4f94" />
        <path d="M0 9l12.500 9L25 9v14H0z" fill="#28a8ea" />
        <path d="M0 23l12.500-8L25 23z" fill="#1489d5" />
      </Ico>
      <div className="ml-4 flex">
        <AppSlot>
          <Ico w={22} h={20}>
            <path d="M0 1h9l2 2h10v4H0z" fill="#d99a12" />
            <path d="M0 4h22v14H0z" fill="#ffd766" />
            <path d="M4 11h14v8h-4v-4H8v4H4z" fill="#3e8fd6" />
          </Ico>
        </AppSlot>
        <AppSlot><OfficeIcon letter="W" color="#2b579a" /></AppSlot>
        <AppSlot>
          <Ico w={22} h={22}>
            <circle cx="11" cy="11" r="11" fill="#fbc116" />
            <path d="M11 11L1.500 5.500A11 11 0 0 1 20.500 5.500H11z" fill="#e33b2e" />
            <path d="M1.500 5.500A11 11 0 0 0 11 22l5-8.500L11 11z" fill="#2da94f" />
            <path d="M1.500 5.500L6 14l5-3z" fill="#2da94f" />
            <circle cx="11" cy="11" r="5.300" fill="#fff" />
            <circle cx="11" cy="11" r="4.200" fill="#3b76e8" />
          </Ico>
        </AppSlot>
        <AppSlot><OfficeIcon letter="P" color="#d24726" /></AppSlot>
      </div>
      <div className="-ml-1 flex h-10 w-12 items-center justify-center border-b-2 border-[#0078d7] bg-[#edf2f7]">
        <Ico w={20} h={25}>
          <path d="M3 3C9-1 19 3 18 10c-.500 4-3 6-6 6C5 16 1 8 3 3z" stroke="#d33a12" strokeWidth="3" />
          <path d="M10 2L8 12l3 5M12 3l1 12" stroke="#999fa5" strokeWidth="2.500" />
          <circle cx="3.500" cy="18" r="2.600" stroke="#1b66b4" strokeWidth="1.800" />
          <circle cx="11.500" cy="21" r="2.600" stroke="#2aa3e8" strokeWidth="1.800" />
        </Ico>
      </div>
      <Ico w={22} h={22} className="ml-[89px]">
        <defs><linearGradient id="sun" x1="0" y1="0" x2="0" y2="1"><stop stopColor="#ffc423" /><stop offset="1" stopColor="#f17b16" /></linearGradient></defs>
        <circle cx="10.500" cy="10.500" r="10" fill="url(#sun)" />
        <path d="M12 18.500a3.300 3.300 0 0 1 0-6.500 4 4 0 0 1 7 1.500 2.600 2.600 0 0 1 0 5z" fill="#e9f2fc" />
      </Ico>
      <Fit w={29} className="ml-[9px] text-[14px]">30°C</Fit>
      <Fit w={86} className="ml-[9px] text-[13.500px]">Très ensoleillé</Fit>
      <Ico w={13} h={8} className="ml-4"><path d="M.7 7l5.800-6 5.800 6" stroke="#111" strokeWidth="1.300" /></Ico>
      <Ico w={12} h={18} className="ml-3">
        <path d="M2 2.500c2-2 6-2 8 0M2 15.500c2 2 6 2 8 0" stroke="#111" strokeWidth="1.200" />
        <rect x=".7" y="5" width="7.500" height="8" rx="1.500" stroke="#111" strokeWidth="1.300" />
        <path d="M8 8l3-1.500v5L8 10z" stroke="#111" />
      </Ico>
      <Ico w={14} h={14} className="ml-[11px]">
        <path d="M1 13A12 12 0 0 1 13 1M4 13a9 9 0 0 1 9-9M7 13a6 6 0 0 1 6-6" stroke="#222" strokeWidth="1.200" />
        <path d="M9.500 13.500a4 4 0 0 1 4-4v4z" fill="#111" />
      </Ico>
      <Ico w={17} h={14} className="ml-[7px]">
        <path d="M.7 4.500h2.500L7 1v12L3.200 9.500H.7z" stroke="#111" strokeWidth="1.100" />
        <path d="M9 4.500c1.500 1.500 1.500 3.500 0 5M11.500 2.500c2.500 2.500 2.500 6.500 0 9M14 .5c3.500 3.500 3.500 9.500 0 13" stroke="#111" />
      </Ico>
      <Ico w={16} h={9} className="ml-[8px]">
        <path d="M.6.6h13v7.800H.6zM15 2.500v4" stroke="#111" strokeWidth="1.200" /><path d="M2 2h6v5H2z" fill="#111" />
      </Ico>
      <Fit w={21} className="ml-[10px] text-[12px]">FRA</Fit>
      <div className="ml-[13px] flex w-[60px] flex-col items-center text-[12px] leading-[18px]">
        <Fit w={27}>20:43</Fit>
        <Fit w={58}>2022-07-04</Fit>
      </div>
      <Ico w={16} h={17} className="ml-[17px]"><path d="M.6.6h14.800v12H11l-3 3.400v-3.400H.6z" stroke="#111" strokeWidth="1.200" /></Ico>
      <div className="mr-[3px] ml-auto h-10 w-px bg-[#a9b3bd]" />
    </div>
  );
}

export default function App() {
  return (
    <div className="flex h-[768px] w-[1366px] flex-col overflow-hidden bg-white font-['Open_Sans','Noto_Sans',sans-serif]">
      <TitleBar />
      <TabBar />
      <Ribbon />
      <Workspace />
      <StatusBar />
      <Taskbar />
    </div>
  );
}
